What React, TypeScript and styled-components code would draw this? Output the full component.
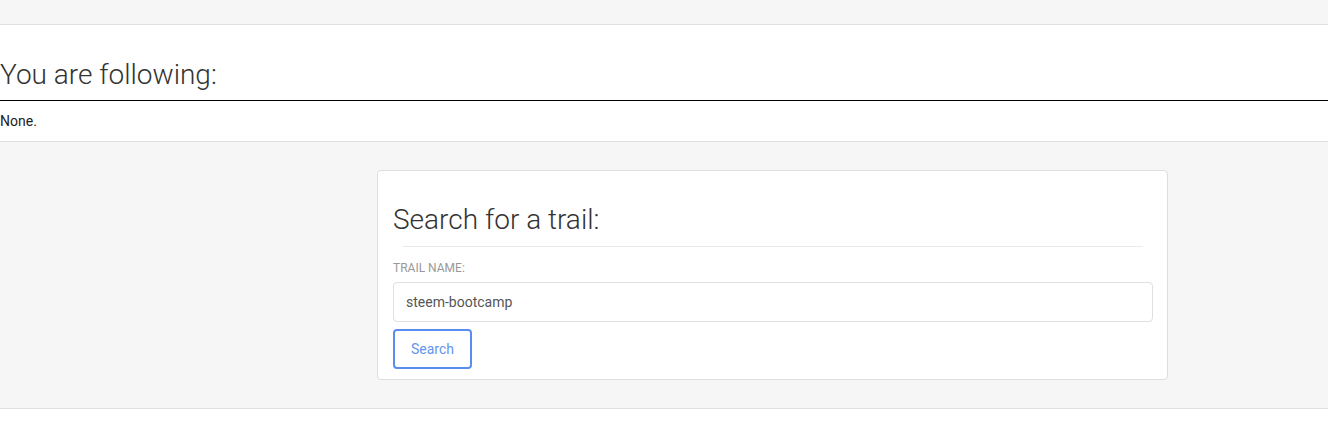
import React from 'react';
import styled, { createGlobalStyle } from 'styled-components';

const GlobalStyle = createGlobalStyle`
  html, body {
    margin: 0;
    padding: 0;
    background: #fff;
    font-family: Roboto, 'Liberation Sans', Arial, sans-serif;
    color: #333;
  }
  * {
    box-sizing: border-box;
  }
`;

const TopBand = styled.div`
  height: 25px;
  background: #f6f6f6;
  border-bottom: 1px solid #e0e0e0;
`;

const FollowingSection = styled.section`
  background: #fff;
  border-bottom: 1px solid #e0e0e0;
`;

const SectionTitle = styled.h2`
  margin: 0;
  padding: 33px 0 8px;
  font-size: 28px;
  font-weight: 300;
  line-height: 34px;
  color: #333;
  border-bottom: 1px solid #000;
`;

const EmptyNote = styled.p`
  margin: 0;
  padding: 10px 0;
  font-size: 14px;
  line-height: 20px;
  color: #222;
`;

const SearchBand = styled.section`
  background: #f6f6f6;
  padding: 28px 0;
  border-bottom: 1px solid #e0e0e0;
`;

const Card = styled.div`
  margin-left: 377px;
  width: 791px;
  background: #fff;
  border: 1px solid #dedede;
  border-radius: 4px;
  padding: 32px 14px 10px 15px;
`;

const CardTitle = styled.h3`
  margin: 0;
  font-size: 28px;
  font-weight: 300;
  line-height: 34px;
  color: #333;
`;

const Divider = styled.hr`
  margin: 9px 10px 13px;
  border: 0;
  border-top: 1px solid #eaeaea;
`;

const FieldLabel = styled.label`
  display: block;
  font-size: 12px;
  line-height: 16px;
  color: #999;
  text-transform: uppercase;
  margin-bottom: 6px;
`;

const TextInput = styled.input`
  display: block;
  width: 100%;
  height: 40px;
  padding: 0 12px;
  font-family: inherit;
  font-size: 14px;
  color: #555;
  background: #fff;
  border: 1px solid #e0e0e0;
  border-radius: 4px;
  outline: none;
`;

const OutlineButton = styled.button`
  display: block;
  margin-top: 7px;
  width: 79px;
  height: 40px;
  padding: 0;
  font-family: inherit;
  font-size: 14px;
  color: #6495ed;
  background: #fff;
  border: 2px solid #5b8def;
  border-radius: 4px;
  cursor: pointer;
`;

export default function App() {
  return (
    <>
      <GlobalStyle />
      <TopBand />
      <FollowingSection>
        <SectionTitle>You are following:</SectionTitle>
        <EmptyNote>None.</EmptyNote>
      </FollowingSection>
      <SearchBand>
        <Card>
          <CardTitle>Search for a trail:</CardTitle>
          <Divider />
          <FieldLabel htmlFor="trail-name">Trail name:</FieldLabel>
          <TextInput id="trail-name" defaultValue="steem-bootcamp" />
          <OutlineButton>Search</OutlineButton>
        </Card>
      </SearchBand>
    </>
  );
}
